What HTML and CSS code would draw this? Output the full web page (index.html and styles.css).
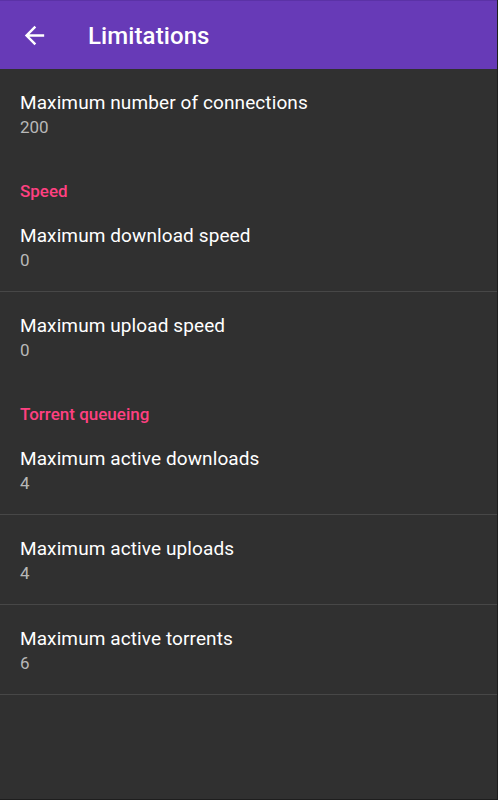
FILE: index.html
```html
<!DOCTYPE html>
<html lang="en-US">
<head>
  <meta charset="UTF-8">
  <title>Limitations</title>
  <link rel="stylesheet" href="styles.css">
</head>
<body>

  <div class="app">
    <header class="toolbar">
      <button type="button" class="btn-back" aria-label="Back">
        <svg viewBox="0 0 24 24" width="29" height="29">
          <path d="M20 11H7.83l5.59-5.59L12 4l-8 8 8 8 1.41-1.41L7.83 13H20v-2z" fill="#fff"/>
        </svg>
      </button>
      <h1 class="toolbar-title">Limitations</h1>
    </header>

    <main class="pref-list">
      <div class="pref-item">
        <div class="pref-title">Maximum number of connections</div>
        <div class="pref-summary">200</div>
      </div>

      <div class="pref-category">Speed</div>
      <div class="pref-item has-divider">
        <div class="pref-title">Maximum download speed</div>
        <div class="pref-summary">0</div>
      </div>
      <div class="pref-item">
        <div class="pref-title">Maximum upload speed</div>
        <div class="pref-summary">0</div>
      </div>

      <div class="pref-category">Torrent queueing</div>
      <div class="pref-item has-divider">
        <div class="pref-title">Maximum active downloads</div>
        <div class="pref-summary">4</div>
      </div>
      <div class="pref-item has-divider">
        <div class="pref-title">Maximum active uploads</div>
        <div class="pref-summary">4</div>
      </div>
      <div class="pref-item has-divider">
        <div class="pref-title">Maximum active torrents</div>
        <div class="pref-summary">6</div>
      </div>
    </main>
  </div>

</body>
</html>
```

FILE: styles.css
```css
html,
body {
  margin: 0;
  height: 100%;
  background: #303030;
}
body {
  font-family: Roboto, "Liberation Sans", sans-serif;
}
.app {
  min-height: 100%;
  box-sizing: border-box;
  border-right: 1px solid #1e1e1e;
  border-bottom: 1px solid #1e1e1e;
  background: #303030;
}
.toolbar {
  display: flex;
  align-items: center;
  height: 68px;
  border-top: 1px solid #5b32a6;
  background: #673ab7;
  color: #fff;
}
.btn-back {
  display: flex;
  align-items: center;
  justify-content: center;
  margin-left: 20px;
  padding: 0;
  border: none;
  background: none;
  cursor: pointer;
}
.toolbar-title {
  margin: 2px 0 0 39px;
  font-size: 24px;
  font-weight: 500;
  letter-spacing: 0.1px;
}
.pref-list {
  display: flex;
  flex-direction: column;
}
.pref-item {
  padding: 22px 20px 19px;
  height: 48px;
}
.pref-item.has-divider {
  border-bottom: 1px solid #474747;
}
.pref-title {
  font-size: 19px;
  line-height: 24px;
  letter-spacing: 0.1px;
  color: #fff;
}
.pref-summary {
  font-size: 17px;
  line-height: 25px;
  color: #b8b8b8;
}
.pref-category {
  padding: 23px 20px 1px;
  font-size: 17px;
  font-weight: 500;
  line-height: 20px;
  color: #ff4081;
}
```
